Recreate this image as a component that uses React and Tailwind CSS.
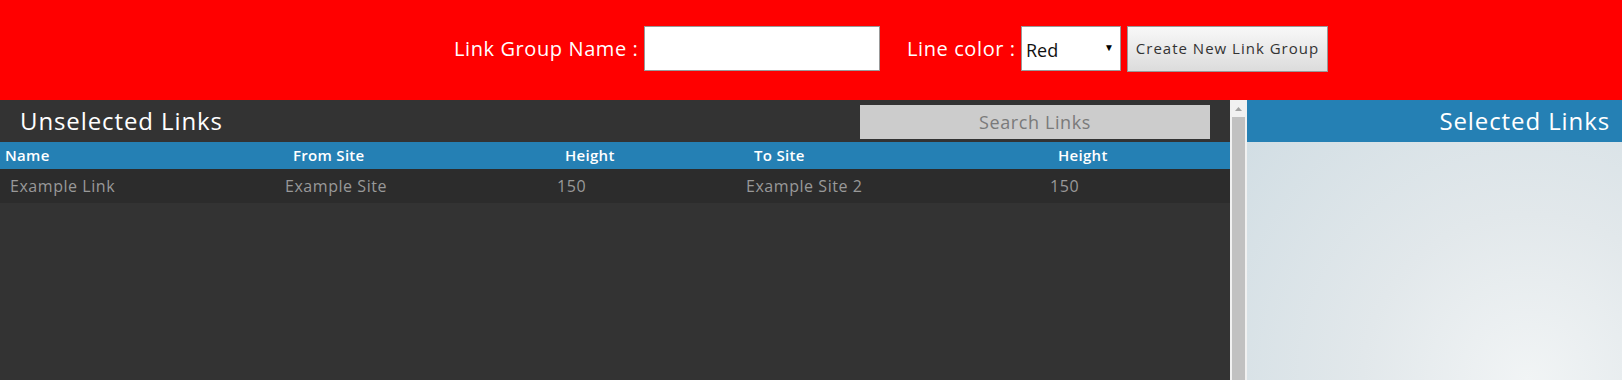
import React, { useState } from 'react';

const font = { fontFamily: '"Open Sans", Lato, sans-serif' };

const links = [
  { name: 'Example Link', from: 'Example Site', fromHeight: 150, to: 'Example Site 2', toHeight: 150 },
];

export default function App() {
  const [groupName, setGroupName] = useState('');
  const [color, setColor] = useState('Red');
  const [search, setSearch] = useState('');

  return (
    <div className="w-[1622px] h-[380px] overflow-hidden flex flex-col bg-[#333]" style={font}>
      {/* top bar */}
      <div className="h-[100px] shrink-0 bg-[#ff0000] flex items-center pl-[454px] pb-[3px]">
        <label className="w-[190px] text-[20px] text-white tracking-[0.6px]">Link Group Name :</label>
        <input
          value={groupName}
          onChange={(e) => setGroupName(e.target.value)}
          className="w-[236px] h-[45px] bg-white border border-[#999] outline-none px-2 text-[18px]"
        />
        <label className="w-[141px] pl-[27px] text-[20px] text-white tracking-[0.6px]">Line color :</label>
        <div className="relative w-[100px] h-[45px] bg-white border border-[#999]">
          <select
            value={color}
            onChange={(e) => setColor(e.target.value)}
            className="appearance-none w-full h-full bg-transparent outline-none pl-[4px] pt-[3px] text-[18px] text-[#111]"
          >
            <option>Red</option>
            <option>Blue</option>
            <option>Green</option>
          </select>
          <span className="absolute right-[6px] top-[13px] text-[10px] text-black pointer-events-none">▼</span>
        </div>
        <button className="ml-[6px] w-[201px] h-[46px] border border-[#999] bg-[linear-gradient(#f8f8f8,#dcdcdc)] text-[15px] text-[#333] tracking-[1px]">
          Create New Link Group
        </button>
      </div>

      <div className="flex flex-1 min-h-0">
        {/* unselected links */}
        <div className="w-[1230px] flex flex-col bg-[#333]">
          <div className="h-[42px] flex items-center justify-between pl-[20px] pr-[20px]">
            <h2 className="text-[24px] text-white tracking-[0.9px]">Unselected Links</h2>
            <input
              value={search}
              onChange={(e) => setSearch(e.target.value)}
              placeholder="Search Links"
              className="w-[350px] h-[34px] mt-[1px] bg-[#ccc] outline-none text-center text-[18px] tracking-[0.6px] text-[#555] placeholder:text-[#7a7a7a]"
            />
          </div>
          <div className="h-[27px] bg-[#2580b4] grid grid-cols-[288px_272px_189px_304px_1fr] items-center text-white font-semibold text-[15px] tracking-[0.3px]">
            <div className="pl-[5px]">Name</div>
            <div className="pl-[5px]">From Site</div>
            <div className="pl-[5px]">Height</div>
            <div className="pl-[5px]">To Site</div>
            <div className="pl-[5px]">Height</div>
          </div>
          {links.map((l) => (
            <div key={l.name} className="h-[34px] bg-[#2c2c2c] grid grid-cols-[275px_272px_189px_304px_1fr] items-center text-[#999] text-[16px] tracking-[0.55px]">
              <div className="pl-[10px]">{l.name}</div>
              <div className="pl-[10px]">{l.from}</div>
              <div className="pl-[10px]">{l.fromHeight}</div>
              <div className="pl-[10px]">{l.to}</div>
              <div className="pl-[10px]">{l.toHeight}</div>
            </div>
          ))}
        </div>

        {/* scrollbar */}
        <div className="w-[17px] bg-[#f1f1f1] flex flex-col items-center">
          <div className="h-[17px] flex items-center justify-center">
            <svg width="7" height="4" viewBox="0 0 7 4"><path d="M0 4 L3.5 0 L7 4 Z" fill="#a3a3a3" /></svg>
          </div>
          <div className="flex-1 w-[13px] bg-[#c1c1c1]" />
        </div>

        {/* selected links */}
        <div className="flex-1 flex flex-col">
          <div className="h-[42px] bg-[#2580b4] flex items-center justify-end pr-[12px]">
            <h2 className="text-[24px] text-white tracking-[0.9px]">Selected Links</h2>
          </div>
          <div className="flex-1 bg-[radial-gradient(circle_at_75%_100%,#f1f4f5_0%,#e2e8eb_45%,#d2dee4_100%)]" />
        </div>
      </div>
    </div>
  );
}
